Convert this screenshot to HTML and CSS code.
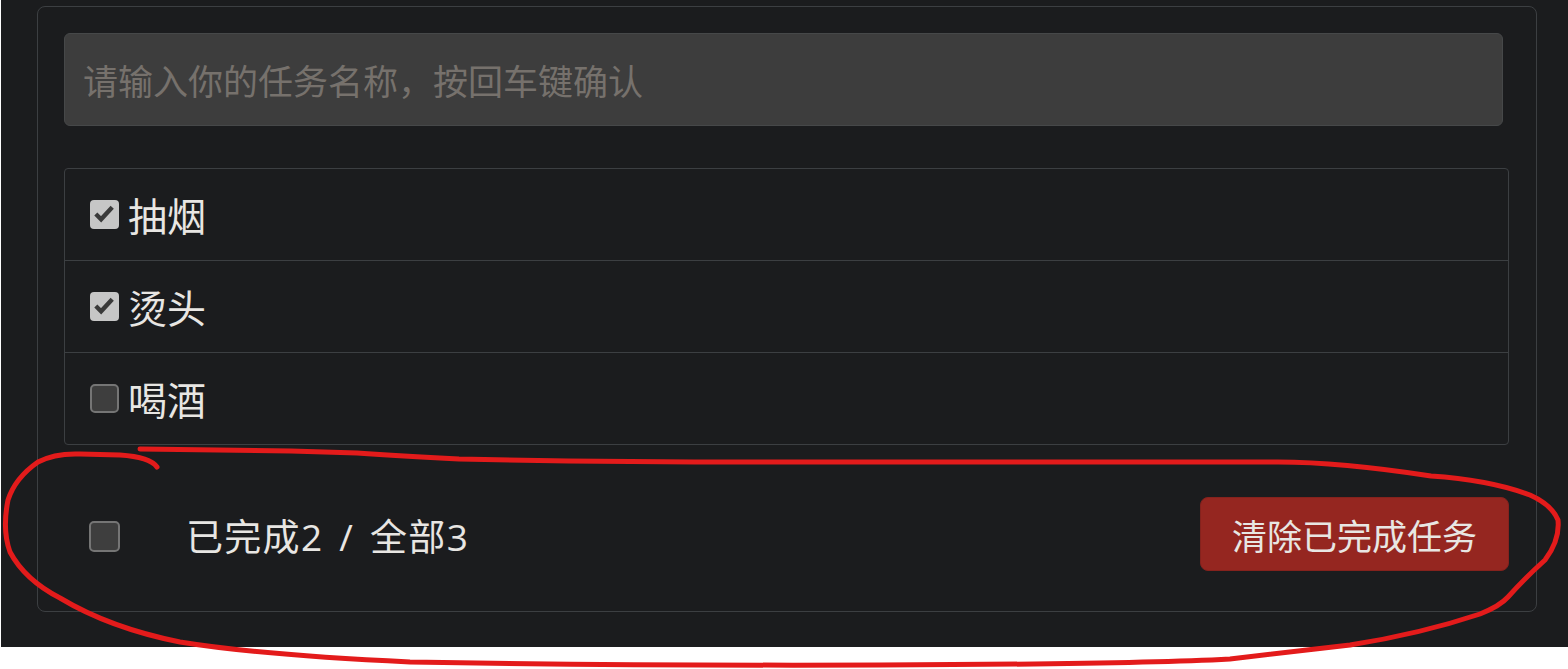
FILE: index.html
```html
<!DOCTYPE html>
<html lang="zh-CN">
<head>
    <meta charset="UTF-8">
    <meta name="viewport" content="width=device-width, initial-scale=1.0">
    <title>任务列表</title>
    <link rel="stylesheet" href="styles.css">
</head>
<body>
    <div class="screen">
        <div class="todo">
            <input class="todo-input" type="text" placeholder="请输入你的任务名称，按回车键确认">
            <ul class="todo-list">
                <li class="item">
                    <span class="box checked"><svg viewBox="0 0 30 30"><path d="M6 14.5 L11.5 20 L23 7.5"/></svg></span>
                    <span class="name">抽烟</span>
                </li>
                <li class="item">
                    <span class="box checked"><svg viewBox="0 0 30 30"><path d="M6 14.5 L11.5 20 L23 7.5"/></svg></span>
                    <span class="name">烫头</span>
                </li>
                <li class="item">
                    <span class="box"></span>
                    <span class="name">喝酒</span>
                </li>
            </ul>
            <div class="footer">
                <span class="box big"></span>
                <span class="count">已完成2 / 全部3</span>
                <button class="btn-danger">清除已完成任务</button>
            </div>
        </div>
    </div>

    <!-- 手绘的红圈标注 -->
    <svg class="mark" viewBox="0 0 1568 669">
        <path d="M157,467 Q150,457 120,455 L80,454 Q55,453 38,462 Q15,478 8,500 Q2,530 10,552 Q25,580 60,598 Q110,628 180,642 Q260,655 410,662 C700,667 1100,666 1230,659 Q1300,651 1350,645 Q1420,634 1480,614 Q1500,606 1508,597 Q1525,578 1545,560 Q1560,540 1558,520 Q1552,505 1530,495 Q1490,480 1431,476 Q1340,462 1278,462 L760,462 Q600,462 459,459 Q400,456 357,453 L291,451 L140,449"/>
    </svg>
</body>
</html>
```

FILE: styles.css
```css
html, body {
    height: 669px;
}
body {
    margin: 0;
    background-color: #ffffff;
    font-family: "Noto Sans CJK SC", "Noto Sans", sans-serif;
    color: #e8e6e3;
    position: relative;
    overflow: hidden;
}
.screen {
    width: 1567px;
    height: 647px;
    margin-left: 1px;
    padding-top: 6px;
    box-sizing: border-box;
    background-color: #1b1c1e;
}
.todo {
    width: 1500px;
    margin-left: 36px;
    box-sizing: border-box;
    border: 1px solid #3c3f42;
    border-radius: 8px;
    padding: 26px 27px 38px 26px;
}
.todo-input {
    display: block;
    width: 1439px;
    height: 93px;
    box-sizing: border-box;
    margin: 0 0 42px 0;
    padding: 0 18px;
    background-color: #3d3d3d;
    border: 1px solid #464849;
    border-radius: 6px;
    font-family: inherit;
    font-size: 35px;
    color: #e8e6e3;
    outline: none;
}
.todo-input::placeholder {
    color: #76716c;
}
.todo-list {
    list-style: none;
    margin: 0;
    padding: 0;
    border: 1px solid #3c3f42;
    border-radius: 4px;
}
.item {
    display: flex;
    align-items: center;
    height: 91px;
    padding-left: 25px;
    border-top: 1px solid #3c3f42;
}
.item:first-child {
    border-top: none;
}
.item .name {
    font-size: 39px;
    line-height: 1;
    margin-left: 9px;
}
/* 复选框 */
.box {
    width: 29px;
    height: 29px;
    box-sizing: border-box;
    border: 2px solid #757575;
    border-radius: 5px;
    background-color: #3e3e3e;
    display: flex;
    align-items: center;
    justify-content: center;
}
.box.checked {
    border: none;
    border-radius: 4px;
    background-color: #c6c6c6;
}
.box svg {
    width: 29px;
    height: 29px;
}
.box svg path {
    fill: none;
    stroke: #3a3a3a;
    stroke-width: 4.5;
}
.box.big {
    width: 31px;
    height: 31px;
}
.footer {
    display: flex;
    align-items: center;
    height: 74px;
    margin-top: 54px;
    padding-left: 25px;
}
.count {
    font-family: "Open Sans", "Noto Sans CJK SC", sans-serif;
    font-size: 37px;
    line-height: 1;
    letter-spacing: 1.3px;
    word-spacing: 5px;
    margin-left: 66px;
}
.btn-danger {
    margin-left: auto;
    margin-top: -4px;
    height: 74px;
    padding: 0 31px;
    background-color: #952620;
    border: 1px solid #85221d;
    border-radius: 8px;
    font-family: inherit;
    font-size: 35px;
    color: #e8e6e3;
}
.mark {
    position: absolute;
    top: 0;
    left: 0;
    width: 1568px;
    height: 669px;
    pointer-events: none;
}
.mark path {
    fill: none;
    stroke: #e31b1b;
    stroke-width: 5;
    stroke-linecap: round;
    stroke-linejoin: round;
}
```
